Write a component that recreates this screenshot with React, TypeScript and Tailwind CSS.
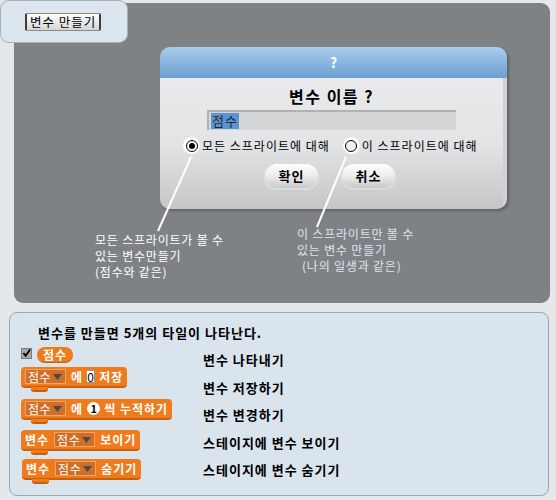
const font = { fontFamily: "'Noto Sans CJK KR', 'Noto Sans', sans-serif" };

const Dropdown = ({ wide }: { wide?: boolean }) => (
  <span
    className={`flex items-center h-[15px] pl-[2px] pr-[3px] bg-[#d06d26] border border-[#f2a464] text-[12px] leading-none text-white font-normal tracking-[0.5px] ${wide ? 'mx-[5px]' : ''}`}
  >
    점수
    <svg width="9" height="6" viewBox="0 0 9 6" className="ml-[2px]">
      <path d="M0 0 L9 0 L4.5 6 Z" fill="#4a4a4a" />
    </svg>
  </span>
);

const Block = ({ children }: { children: React.ReactNode }) => (
  <div className="flex flex-col items-start">
    <div className="flex items-center h-[21px] px-[4px] rounded-[4px] bg-[#ef7b1d] border-b-2 border-[#c75f0c] text-white font-bold text-[12px] leading-none tracking-[1px]">
      {children}
    </div>
    <div className="ml-[10px] -mt-[1px] w-[17px] h-[5px] rounded-b-[3px] bg-[#ef7b1d] border-b-2 border-[#c75f0c]" />
  </div>
);

export default function App() {
  return (
    <div className="relative w-[556px] h-[500px] bg-[#e5e8eb] pt-[3px] overflow-hidden" style={font}>
      {/* top-left panel */}
      <div className="absolute left-0 top-0 w-[128px] h-[43px] rounded-[9px] border border-[#a9b0b6] bg-[#dbe5ee] z-10 flex items-start pl-[24px] pt-[12px]">
        <div className="h-[18px] px-[3px] rounded-[2px] border-x-2 border-[#3c3c3c] border-y border-y-[#8b8b8b] bg-gradient-to-b from-[#ffffff] to-[#d5d5d5] text-[12.5px] leading-[15px] tracking-[1px] text-black">
          변수 만들기
        </div>
      </div>

      {/* dark canvas */}
      <div className="relative ml-[14px] w-[536px] h-[300px] rounded-[9px] bg-[#7f8285] pt-[44px] pl-[146px]">
        <div className="w-[347px] h-[162px] rounded-[10px] overflow-hidden flex flex-col shadow-[2px_2px_3px_rgba(0,0,0,0.25)]">
          <div className="h-[31px] bg-gradient-to-b from-[#a9cdee] to-[#6b9fd1] flex items-center justify-center text-white font-bold text-[14px]">
            ?
          </div>
          <div className="flex-1 flex flex-col items-center bg-gradient-to-b from-[#e8eaec] via-[#e2e4e6] to-[#c4c6c8] border-r-4 border-[#cfd1d3]">
            <div className="mt-[9px] text-[16px] font-bold leading-[18px] tracking-[1.5px] text-black">변수 이름 ?</div>
            <div className="mt-[5px] w-[249px] h-[20px] bg-[#d3d5d7] border-t-2 border-l-2 border-[#b0b2b4] flex items-center pl-[2px]">
              <span className="bg-[#5d93cf] text-[#1c2a3a] text-[13px] leading-[16px] px-[1px] tracking-[1px]">점수</span>
            </div>
            <div className="mt-[7px] flex items-center text-[12px] leading-[16px] tracking-[1px] text-black w-full pl-[23px]">
              <span className="w-[17px] h-[17px] rounded-full bg-white flex items-center justify-center">
                <span className="w-[12px] h-[12px] rounded-full border border-black bg-white flex items-center justify-center">
                  <span className="w-[6px] h-[6px] rounded-full bg-black" />
                </span>
              </span>
              <span className="ml-[2px]">모든 스프라이트에 대해</span>
              <span className="ml-[13px] w-[17px] h-[17px] rounded-full bg-white flex items-center justify-center">
                <span className="w-[12px] h-[12px] rounded-full border border-black bg-[#eef0f2]" />
              </span>
              <span className="ml-[2px]">이 스프라이트에 대해</span>
            </div>
            <div className="mt-[8px] flex gap-[20px] -ml-[3px]">
              {['확인', '취소'].map((t) => (
                <div key={t} className="p-[2px] rounded-full bg-[#d9dbdd]">
                  <div className="w-[53px] h-[24px] rounded-full bg-gradient-to-b from-[#ffffff] via-[#ececec] to-[#c9c9c9] flex items-center justify-center text-[13px] font-bold tracking-[1px]">
                    {t}
                  </div>
                </div>
              ))}
            </div>
          </div>
        </div>

        {/* leader lines */}
        <svg className="absolute left-0 top-0" width="536" height="300">
          <line x1="177" y1="154" x2="144" y2="228" stroke="white" strokeWidth="2" />
          <line x1="332" y1="154" x2="303" y2="224" stroke="white" strokeWidth="2" />
        </svg>

        <div className="absolute left-[81px] top-[229px] text-white text-[12px] leading-[16px] tracking-[0.8px]">
          <div>모든 스프라이트가 볼 수</div>
          <div>있는 변수만들기</div>
          <div>(점수와 같은)</div>
        </div>
        <div className="absolute left-[283px] top-[223px] text-[#dbe6f1] text-[12px] leading-[16px] tracking-[0.8px]">
          <div>이 스프라이트만 볼 수</div>
          <div>있는 변수 만들기</div>
          <div className="pl-[5px]">(나의 일생과 같은)</div>
        </div>
      </div>

      {/* bottom panel */}
      <div className="ml-[9px] mt-[9px] w-[540px] h-[184px] rounded-[8px] border border-[#9da5ad] bg-[#d9e4ed] pt-[11px]">
        <div className="pl-[28px] text-[13px] font-bold leading-[18px] tracking-[1px] text-black">
          변수를 만들면 5개의 타일이 나타난다.
        </div>
        <div className="flex mt-[3px]">
          <div className="pl-[11px] w-[193px] flex flex-col">
            <div className="flex items-center h-[17px] mt-[1px]">
              <span className="w-[11px] h-[11px] mt-[-3px] bg-[#a8aaac] border border-[#7a7c7e] flex items-center justify-center">
                <svg width="10" height="10" viewBox="0 0 10 10">
                  <path d="M1.5 5 L4 8 L9 1" stroke="black" strokeWidth="2" fill="none" />
                </svg>
              </span>
              <span className="ml-[5px] h-[16px] px-[6px] rounded-full bg-[#ef7b1d] border-b border-[#c75f0c] text-white font-bold text-[12px] leading-[15px] tracking-[1px]">
                점수
              </span>
            </div>
            <div className="mt-[4px]">
              <Block>
                <Dropdown />
                <span className="ml-[5px]">에</span>
                <span className="ml-[3px] w-[9px] h-[13px] bg-white border border-[#999] text-black font-normal text-[12px] leading-[12px] text-center tracking-normal">0</span>
                <span className="ml-[4px]">저장</span>
              </Block>
            </div>
            <div className="mt-[7px]">
              <Block>
                <Dropdown />
                <span className="ml-[5px]">에</span>
                <span className="ml-[4px] w-[13px] h-[13px] rounded-full bg-white text-black text-[11px] leading-[13px] text-center tracking-normal">1</span>
                <span className="ml-[4px]">씩 누적하기</span>
              </Block>
            </div>
            <div className="mt-[6px]">
              <Block>
                <span>변수</span>
                <Dropdown wide />
                <span>보이기</span>
              </Block>
            </div>
            <div className="mt-[4px] ml-[1px]">
              <Block>
                <span>변수</span>
                <Dropdown wide />
                <span>숨기기</span>
              </Block>
            </div>
          </div>
          <div className="flex flex-col pt-[1px] text-[13px] font-bold tracking-[1px] text-black">
            {['변수 나타내기', '변수 저장하기', '변수 변경하기', '스테이지에 변수 보이기', '스테이지에 변수 숨기기'].map((t) => (
              <div key={t} className="h-[27.5px] leading-[27.5px]">{t}</div>
            ))}
          </div>
        </div>
      </div>
    </div>
  );
}
